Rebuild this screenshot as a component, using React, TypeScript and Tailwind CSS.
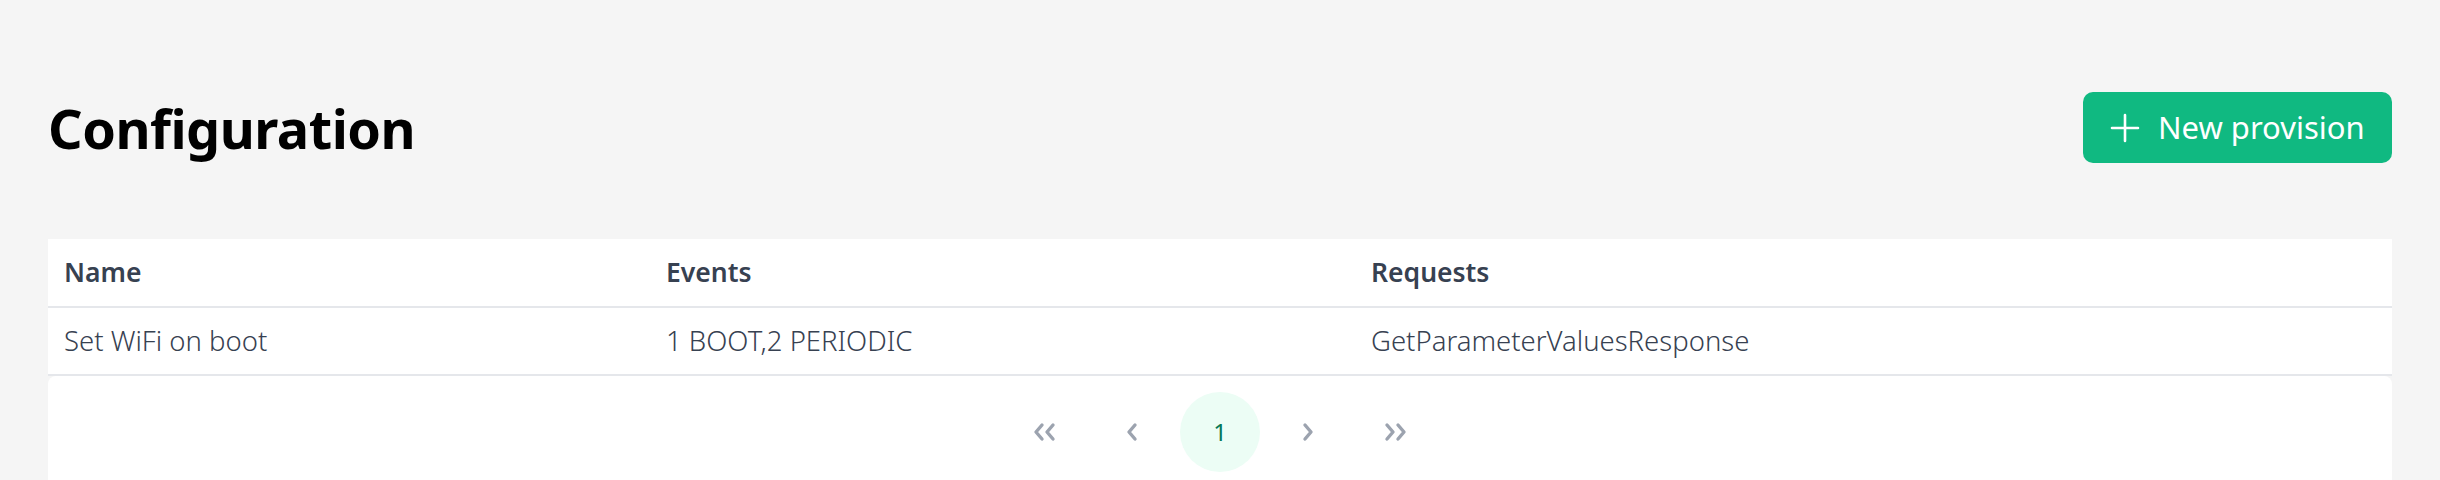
import React from "react";

const rows = [
  {
    name: "Set WiFi on boot",
    events: "1 BOOT,2 PERIODIC",
    requests: "GetParameterValuesResponse",
  },
];

const PlusIcon = () => (
  <svg width="30" height="30" viewBox="0 0 30 30" fill="none" stroke="currentColor" strokeWidth="2.6" strokeLinecap="round">
    <path d="M15 2v26M2 15h26" />
  </svg>
);

const Chevron = ({ dir }: { dir: "left" | "right" }) => (
  <svg width="12" height="20" viewBox="0 0 12 20" fill="none" stroke="currentColor" strokeWidth="3.4" strokeLinecap="round" strokeLinejoin="round">
    {dir === "left" ? <path d="M9 3 3 10l6 7" /> : <path d="M3 3l6 7-6 7" />}
  </svg>
);

const DoubleChevron = ({ dir }: { dir: "left" | "right" }) => (
  <svg width="24" height="20" viewBox="0 0 24 20" fill="none" stroke="currentColor" strokeWidth="3.4" strokeLinecap="round" strokeLinejoin="round">
    {dir === "left" ? (
      <path d="M10 3 4 10l6 7M21 3l-6 7 6 7" />
    ) : (
      <path d="M3 3l6 7-6 7M14 3l6 7-6 7" />
    )}
  </svg>
);

export default function App() {
  return (
    <div className="min-h-[480px] w-full bg-[#f5f5f5] px-[48px] pt-[92px] font-['Noto_Sans',sans-serif]">
      <div className="flex items-center justify-between">
        <h1 className="text-[54px] font-bold leading-none text-black tracking-[-0.5px]">
          Configuration
        </h1>
        <button className="flex h-[71px] w-[309px] items-center gap-[18px] rounded-[10px] bg-[#10b981] pl-[27px] text-[31px] text-white">
          <PlusIcon />
          <span>New provision</span>
        </button>
      </div>

      <div className="mt-[76px] bg-white">
        <table className="w-full border-collapse text-left text-[#374151]">
          <thead>
            <tr className="h-[68px] border-b-2 border-[#e5e7eb] text-[26.5px]">
              <th className="w-[602px] pl-[16px] font-semibold">Name</th>
              <th className="w-[705px] pl-[16px] font-semibold">Events</th>
              <th className="pl-[16px] font-semibold">Requests</th>
            </tr>
          </thead>
          <tbody>
            {rows.map((r) => (
              <tr key={r.name} className="h-[68px] border-b-2 border-[#e5e7eb] text-[27.5px]">
                <td className="pl-[16px] font-light">{r.name}</td>
                <td className="pl-[16px] font-light">{r.events}</td>
                <td className="pl-[16px] font-light">{r.requests}</td>
              </tr>
            ))}
          </tbody>
        </table>
      </div>

      <div className="flex h-[105px] justify-center gap-[8px] rounded-t-[8px] bg-white pt-[16px] text-[#9ca3af]">
        <button className="flex h-[80px] w-[80px] items-center justify-center rounded-full">
          <DoubleChevron dir="left" />
        </button>
        <button className="flex h-[80px] w-[80px] items-center justify-center rounded-full">
          <Chevron dir="left" />
        </button>
        <button className="flex h-[80px] w-[80px] items-center justify-center rounded-full bg-[#ecfdf5] text-[24px] text-[#047857]">
          1
        </button>
        <button className="flex h-[80px] w-[80px] items-center justify-center rounded-full">
          <Chevron dir="right" />
        </button>
        <button className="flex h-[80px] w-[80px] items-center justify-center rounded-full">
          <DoubleChevron dir="right" />
        </button>
      </div>
    </div>
  );
}
